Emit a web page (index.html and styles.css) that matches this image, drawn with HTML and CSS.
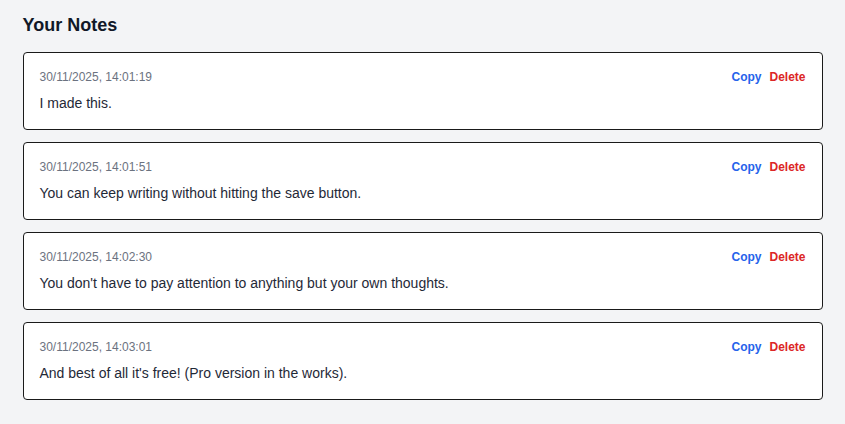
FILE: index.html
```html
<!DOCTYPE html>
<html lang="en">
<head>
<meta charset="utf-8">
<title>Your Notes</title>
<link rel="stylesheet" href="styles.css">
</head>
<body>
<main class="page">
  <h2 class="title">Your Notes</h2>
  <ul class="notes">
    <li class="note">
      <div class="note-head">
        <span class="note-date">30/11/2025, 14:01:19</span>
        <div class="note-actions">
          <button class="btn btn-copy">Copy</button>
          <button class="btn btn-delete">Delete</button>
        </div>
      </div>
      <p class="note-text">I made this.</p>
    </li>
    <li class="note">
      <div class="note-head">
        <span class="note-date">30/11/2025, 14:01:51</span>
        <div class="note-actions">
          <button class="btn btn-copy">Copy</button>
          <button class="btn btn-delete">Delete</button>
        </div>
      </div>
      <p class="note-text">You can keep writing without hitting the save button.</p>
    </li>
    <li class="note">
      <div class="note-head">
        <span class="note-date">30/11/2025, 14:02:30</span>
        <div class="note-actions">
          <button class="btn btn-copy">Copy</button>
          <button class="btn btn-delete">Delete</button>
        </div>
      </div>
      <p class="note-text">You don't have to pay attention to anything but your own thoughts.</p>
    </li>
    <li class="note">
      <div class="note-head">
        <span class="note-date">30/11/2025, 14:03:01</span>
        <div class="note-actions">
          <button class="btn btn-copy">Copy</button>
          <button class="btn btn-delete">Delete</button>
        </div>
      </div>
      <p class="note-text">And best of all it's free! (Pro version in the works).</p>
    </li>
  </ul>
</main>
</body>
</html>
```

FILE: styles.css
```css
* { box-sizing: border-box; }

html, body {
  margin: 0;
  padding: 0;
  background: #f3f4f6;
  font-family: "Liberation Sans", Arial, sans-serif;
  color: #1f2937;
}

.page {
  max-width: 800px;
  margin: 0 auto;
  padding-top: 11px;
}

.title {
  margin: 0 0 13px;
  font-size: 18px;
  line-height: 28px;
  font-weight: 700;
  color: #111827;
}

.notes {
  list-style: none;
  margin: 0;
  padding: 0;
  display: flex;
  flex-direction: column;
  gap: 12px;
}

.note {
  background: #ffffff;
  border: 1px solid #1a1a1a;
  border-radius: 4px;
  padding: 16px;
}

.note-head {
  display: flex;
  justify-content: space-between;
  align-items: center;
  height: 16px;
}

.note-date {
  font-size: 12px;
  line-height: 16px;
  color: #6b7280;
}

.note-actions {
  display: flex;
  gap: 8px;
}

.btn {
  border: 0;
  background: none;
  padding: 0;
  margin: 0;
  font-family: inherit;
  font-size: 12px;
  line-height: 16px;
  font-weight: 700;
  cursor: pointer;
}

.btn-copy { color: #2563eb; }
.btn-delete { color: #dc2626; }

.note-text {
  margin: 8px 0 0;
  font-size: 14px;
  line-height: 20px;
  color: #1f2937;
}
```
